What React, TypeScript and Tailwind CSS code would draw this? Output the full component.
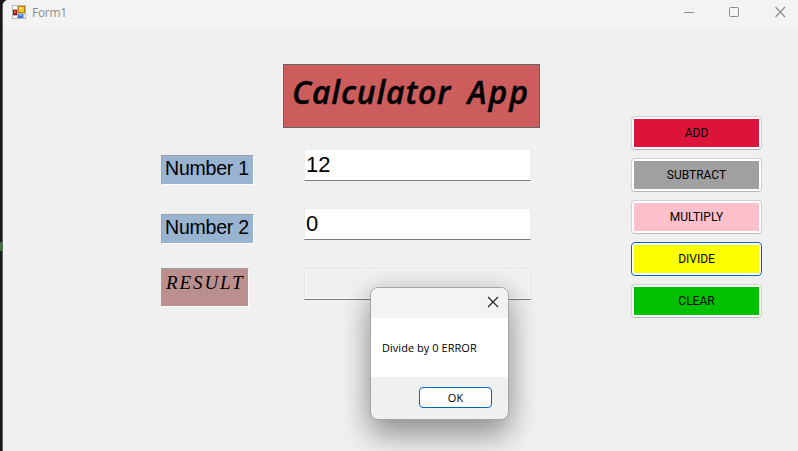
import React from "react";

const operations = [
  { label: "ADD", fill: "bg-[#dc143c]", border: "border-[#d0d0d0] border-b-[#bababa]" },
  { label: "SUBTRACT", fill: "bg-[#a0a0a0]", border: "border-[#d0d0d0] border-b-[#bababa]" },
  { label: "MULTIPLY", fill: "bg-[#ffc0cb]", border: "border-[#d0d0d0] border-b-[#bababa]" },
  { label: "DIVIDE", fill: "bg-[#ffff00]", border: "border-[#0067c0]" },
  { label: "CLEAR", fill: "bg-[#00c000]", border: "border-[#d0d0d0] border-b-[#bababa]" },
];

function FormIcon() {
  return (
    <svg width="14" height="14" viewBox="0 0 14 14" shapeRendering="crispEdges">
      <rect width="14" height="14" fill="#b9b9b9" />
      <rect x="1" y="1" width="4" height="3" fill="#fff" />
      <rect x="1" y="11" width="4" height="2" fill="#fff" />
      <rect x="12" y="9" width="1" height="4" fill="#fff" />
      <rect x="1" y="5" width="4" height="5" fill="#a31515" />
      <rect x="2" y="6" width="2" height="2" fill="#e0605a" />
      <rect x="6" y="1" width="7" height="7" fill="#b07d08" />
      <rect x="7" y="2" width="5" height="5" fill="#f8c928" />
      <rect x="7" y="2" width="3" height="2" fill="#ffe783" />
      <rect x="6" y="9" width="5" height="4" fill="#3b6fd0" />
      <rect x="7" y="9" width="3" height="2" fill="#76a8f4" />
    </svg>
  );
}

function TitleBar() {
  return (
    <header className="flex h-7 shrink-0 items-start bg-[#f3f3f3] pl-[9px] pt-[5px]">
      <FormIcon />
      <span className="ml-[6px] text-[12px] leading-4 tracking-[-0.3px] text-[#8f8f8f] font-['Open_Sans',sans-serif]">Form1</span>
      <div className="ml-auto flex pr-[12px] pt-[1px] text-[#8c8c8c]">
        <svg className="mr-[34px]" width="11" height="12" fill="none" stroke="currentColor"><path d="M0 6.500h10" /></svg>
        <svg className="mr-[35px]" width="11" height="12" fill="none" stroke="currentColor"><rect x=".5" y="1.5" width="9" height="9" rx="1" /></svg>
        <svg width="11" height="12" fill="none" stroke="currentColor" strokeWidth="1.1"><path d="M.5 1l9.500 10M10 1L.5 11" /></svg>
      </div>
    </header>
  );
}

function NumberLabel({ children }: { children: string }) {
  return (
    <div className="h-[30px] w-[93px] whitespace-nowrap border border-[#a0a0a0] border-r-white border-b-white bg-[#99b4d1] pl-[3px] text-[19.5px] leading-[25px] tracking-[-0.2px] text-black">
      {children}
    </div>
  );
}

function Field({ value }: { value: string }) {
  return (
    <div className="h-8 w-[227px] border border-[#ececec] border-b-[#7b7b7b] bg-white pl-[1px] text-[22px] leading-[30px] text-black">
      {value}
    </div>
  );
}

function MessageBox() {
  return (
    <div className="absolute left-[370px] top-[287px] flex h-[133px] w-[139px] flex-col overflow-hidden rounded-lg border border-[#a5a5a5] bg-[#f0f0f0] text-black shadow-[0_17px_30px_rgba(0,0,0,0.32),0_2px_28px_rgba(0,0,0,0.15)] font-['Open_Sans',sans-serif]">
      <div className="flex h-[30px] justify-end bg-[#f3f3f3] pr-[9px] pt-[8px]">
        <svg width="12" height="12" fill="none" stroke="#202020" strokeWidth="1.1"><path d="M1 1l10 10M11 1L1 11" /></svg>
      </div>
      <div className="h-[59px] whitespace-nowrap bg-white pl-[11px] pt-[22px] text-[11px] leading-4 tracking-[0.04px]">Divide by 0 ERROR</div>
      <div className="flex justify-end pr-4 pt-[10px]">
        <div className="h-[21px] w-[73px] rounded border border-[#0067c0] bg-[#fdfdfd] text-center text-[11px] leading-[20px]">OK</div>
      </div>
    </div>
  );
}

export default function App() {
  return (
    <div className="relative flex h-[451px] w-[798px] overflow-hidden bg-[#181818] font-['Liberation_Sans',Arial,sans-serif]">
      <div className="w-[2px] shrink-0 pt-[242px]">
        <div className="h-[9px] w-[2px] bg-[#3d7838]" />
      </div>
      <div className="flex min-w-0 flex-1 flex-col overflow-hidden rounded-tl-[6px] border-l border-[#606060] bg-[#f0f0f0]">
        <TitleBar />
        <main className="flex flex-1 pl-[158px]">
          <section className="w-[470px] shrink-0 pt-[36px]">
            <h1 className="ml-[122px] h-[64px] w-[257px] whitespace-nowrap border border-[#646464] bg-[#cd5c5c] pl-[8px] text-[32px] font-semibold italic leading-[54px] text-black font-['Open_Sans',sans-serif] [-webkit-text-stroke:0.4px_black]">
              <span className="tracking-[0.8px]">Calculator</span>
              <span className="tracking-[2px] [word-spacing:6px]"> App</span>
            </h1>
            <div className="mt-[21px] flex h-[59px]">
              <div className="w-[143px] pt-[6px]"><NumberLabel>Number 1</NumberLabel></div>
              <Field value="12" />
            </div>
            <div className="flex h-[59px]">
              <div className="w-[143px] pt-[6px]"><NumberLabel>Number 2</NumberLabel></div>
              <Field value="0" />
            </div>
            <div className="flex pt-[1px]">
              <div className="w-[143px]">
                <div className="h-[39px] w-[88px] whitespace-nowrap border border-[#a0a0a0] border-r-white border-b-white bg-[#bc8f8f] pl-[4px] text-[19px] italic leading-[27px] tracking-[1.9px] text-black font-['Liberation_Serif',serif]">
                  RESULT
                </div>
              </div>
              <div className="h-8 w-[227px] border border-[#e5e5e5] border-b-[#7b7b7b] bg-[#f0f0f0]">
                <div className="h-full border border-[#fafafa]" />
              </div>
            </div>
          </section>
          <nav className="flex flex-col gap-2 pt-[88px]">
            {operations.map(({ label, fill, border }) => (
              <div key={label} className={`h-[34px] w-[131px] rounded border bg-white p-[2px] ${border}`}>
                <div className={`h-[28px] w-[125px] text-center text-[12px] leading-[28px] text-black font-['Roboto',sans-serif] ${fill}`}>{label}</div>
              </div>
            ))}
          </nav>
        </main>
      </div>
      <MessageBox />
    </div>
  );
}
